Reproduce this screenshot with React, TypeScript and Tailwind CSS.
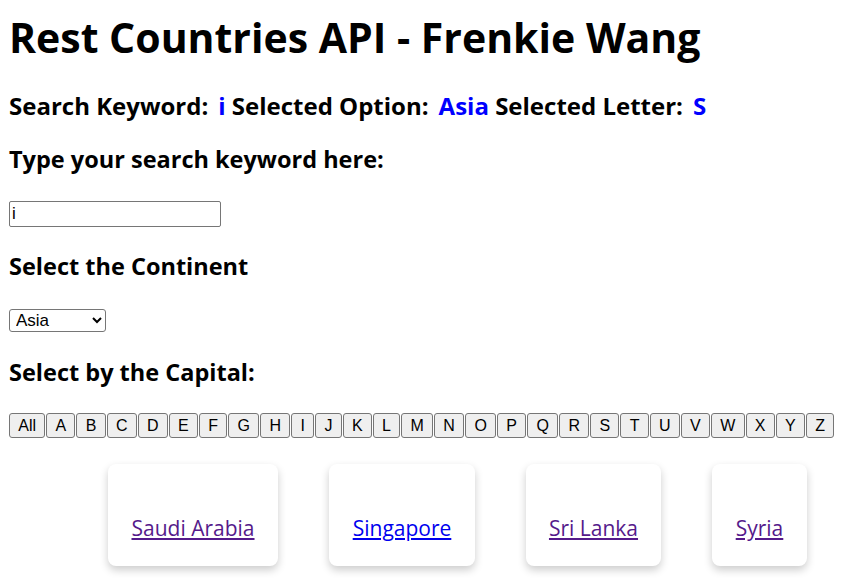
import React from 'react';

const letters = ['All', 'A', 'B', 'C', 'D', 'E', 'F', 'G', 'H', 'I', 'J', 'K', 'L', 'M', 'N', 'O', 'P', 'Q', 'R', 'S', 'T', 'U', 'V', 'W', 'X', 'Y', 'Z'];

const countries = [
  { name: 'Saudi Arabia', width: 'w-[170px]', visited: true },
  { name: 'Singapore', width: 'w-[146px]', visited: false },
  { name: 'Sri Lanka', width: 'w-[135px]', visited: true },
  { name: 'Syria', width: 'w-[95px]', visited: true },
];

const App: React.FC = () => {
  return (
    <div className="min-h-screen bg-white text-black px-[9px] font-['Open_Sans','Noto_Sans',sans-serif]">
      <h1 className="pt-[17px] text-[41px] leading-[41px] font-bold whitespace-nowrap">Rest Countries API - Frenkie Wang</h1>

      <h2 className="mt-[36px] text-[24px] leading-[24px] font-bold whitespace-nowrap">
        Search Keyword:<span className="ml-[10px] text-[#0000ff]">i</span> Selected Option:
        <span className="ml-[10px] text-[#0000ff]">Asia</span> Selected Letter:
        <span className="ml-[10px] text-[#0000ff]">S</span>
      </h2>

      <h3 className="mt-[29.5px] text-[23.5px] leading-[23.5px] font-bold">Type your search keyword here:</h3>
      <input
        className="mt-[30px] block w-[212px] h-[26px] px-[2px] border border-[#767676] rounded-[2px] text-[17px] text-black font-['Liberation_Sans',Arial,sans-serif] outline-none"
        defaultValue="i"
      />

      <h3 className="mt-[27.5px] text-[23.5px] leading-[23.5px] font-bold">Select the Continent</h3>
      <select
        className="mt-[31px] block w-[97px] h-[23px] pl-[2px] border border-[#767676] rounded-[3px] bg-white text-[17px] font-['Liberation_Sans',Arial,sans-serif]"
        defaultValue="Asia"
      >
        <option>Africa</option>
        <option>Americas</option>
        <option>Asia</option>
        <option>Europe</option>
        <option>Oceania</option>
      </select>

      <h3 className="mt-[28.5px] text-[23.5px] leading-[23.5px] font-bold">Select by the Capital:</h3>
      <div className="mt-[29px] flex gap-[1px]">
        {letters.map((l) => (
          <button
            key={l}
            className="h-[25px] px-[8.25px] border border-[#767676] rounded-[3px] bg-[#efefef] text-[16px] leading-[18px] font-['Liberation_Sans',Arial,sans-serif] text-black"
          >
            {l}
          </button>
        ))}
      </div>

      <div className="mt-[26px] pl-[99px] flex gap-[51px]">
        {countries.map((c) => (
          <div
            key={c.name}
            className={`${c.width} h-[102px] pt-[50px] rounded-[8px] bg-white text-center shadow-[0_4px_8px_0_rgba(0,0,0,0.2)]`}
          >
            <a
              href="#"
              className={`text-[21px] leading-[28px] underline whitespace-nowrap ${c.visited ? 'text-[#551a8b]' : 'text-[#0000ee]'}`}
            >
              {c.name}
            </a>
          </div>
        ))}
      </div>
    </div>
  );
};

export default App;
